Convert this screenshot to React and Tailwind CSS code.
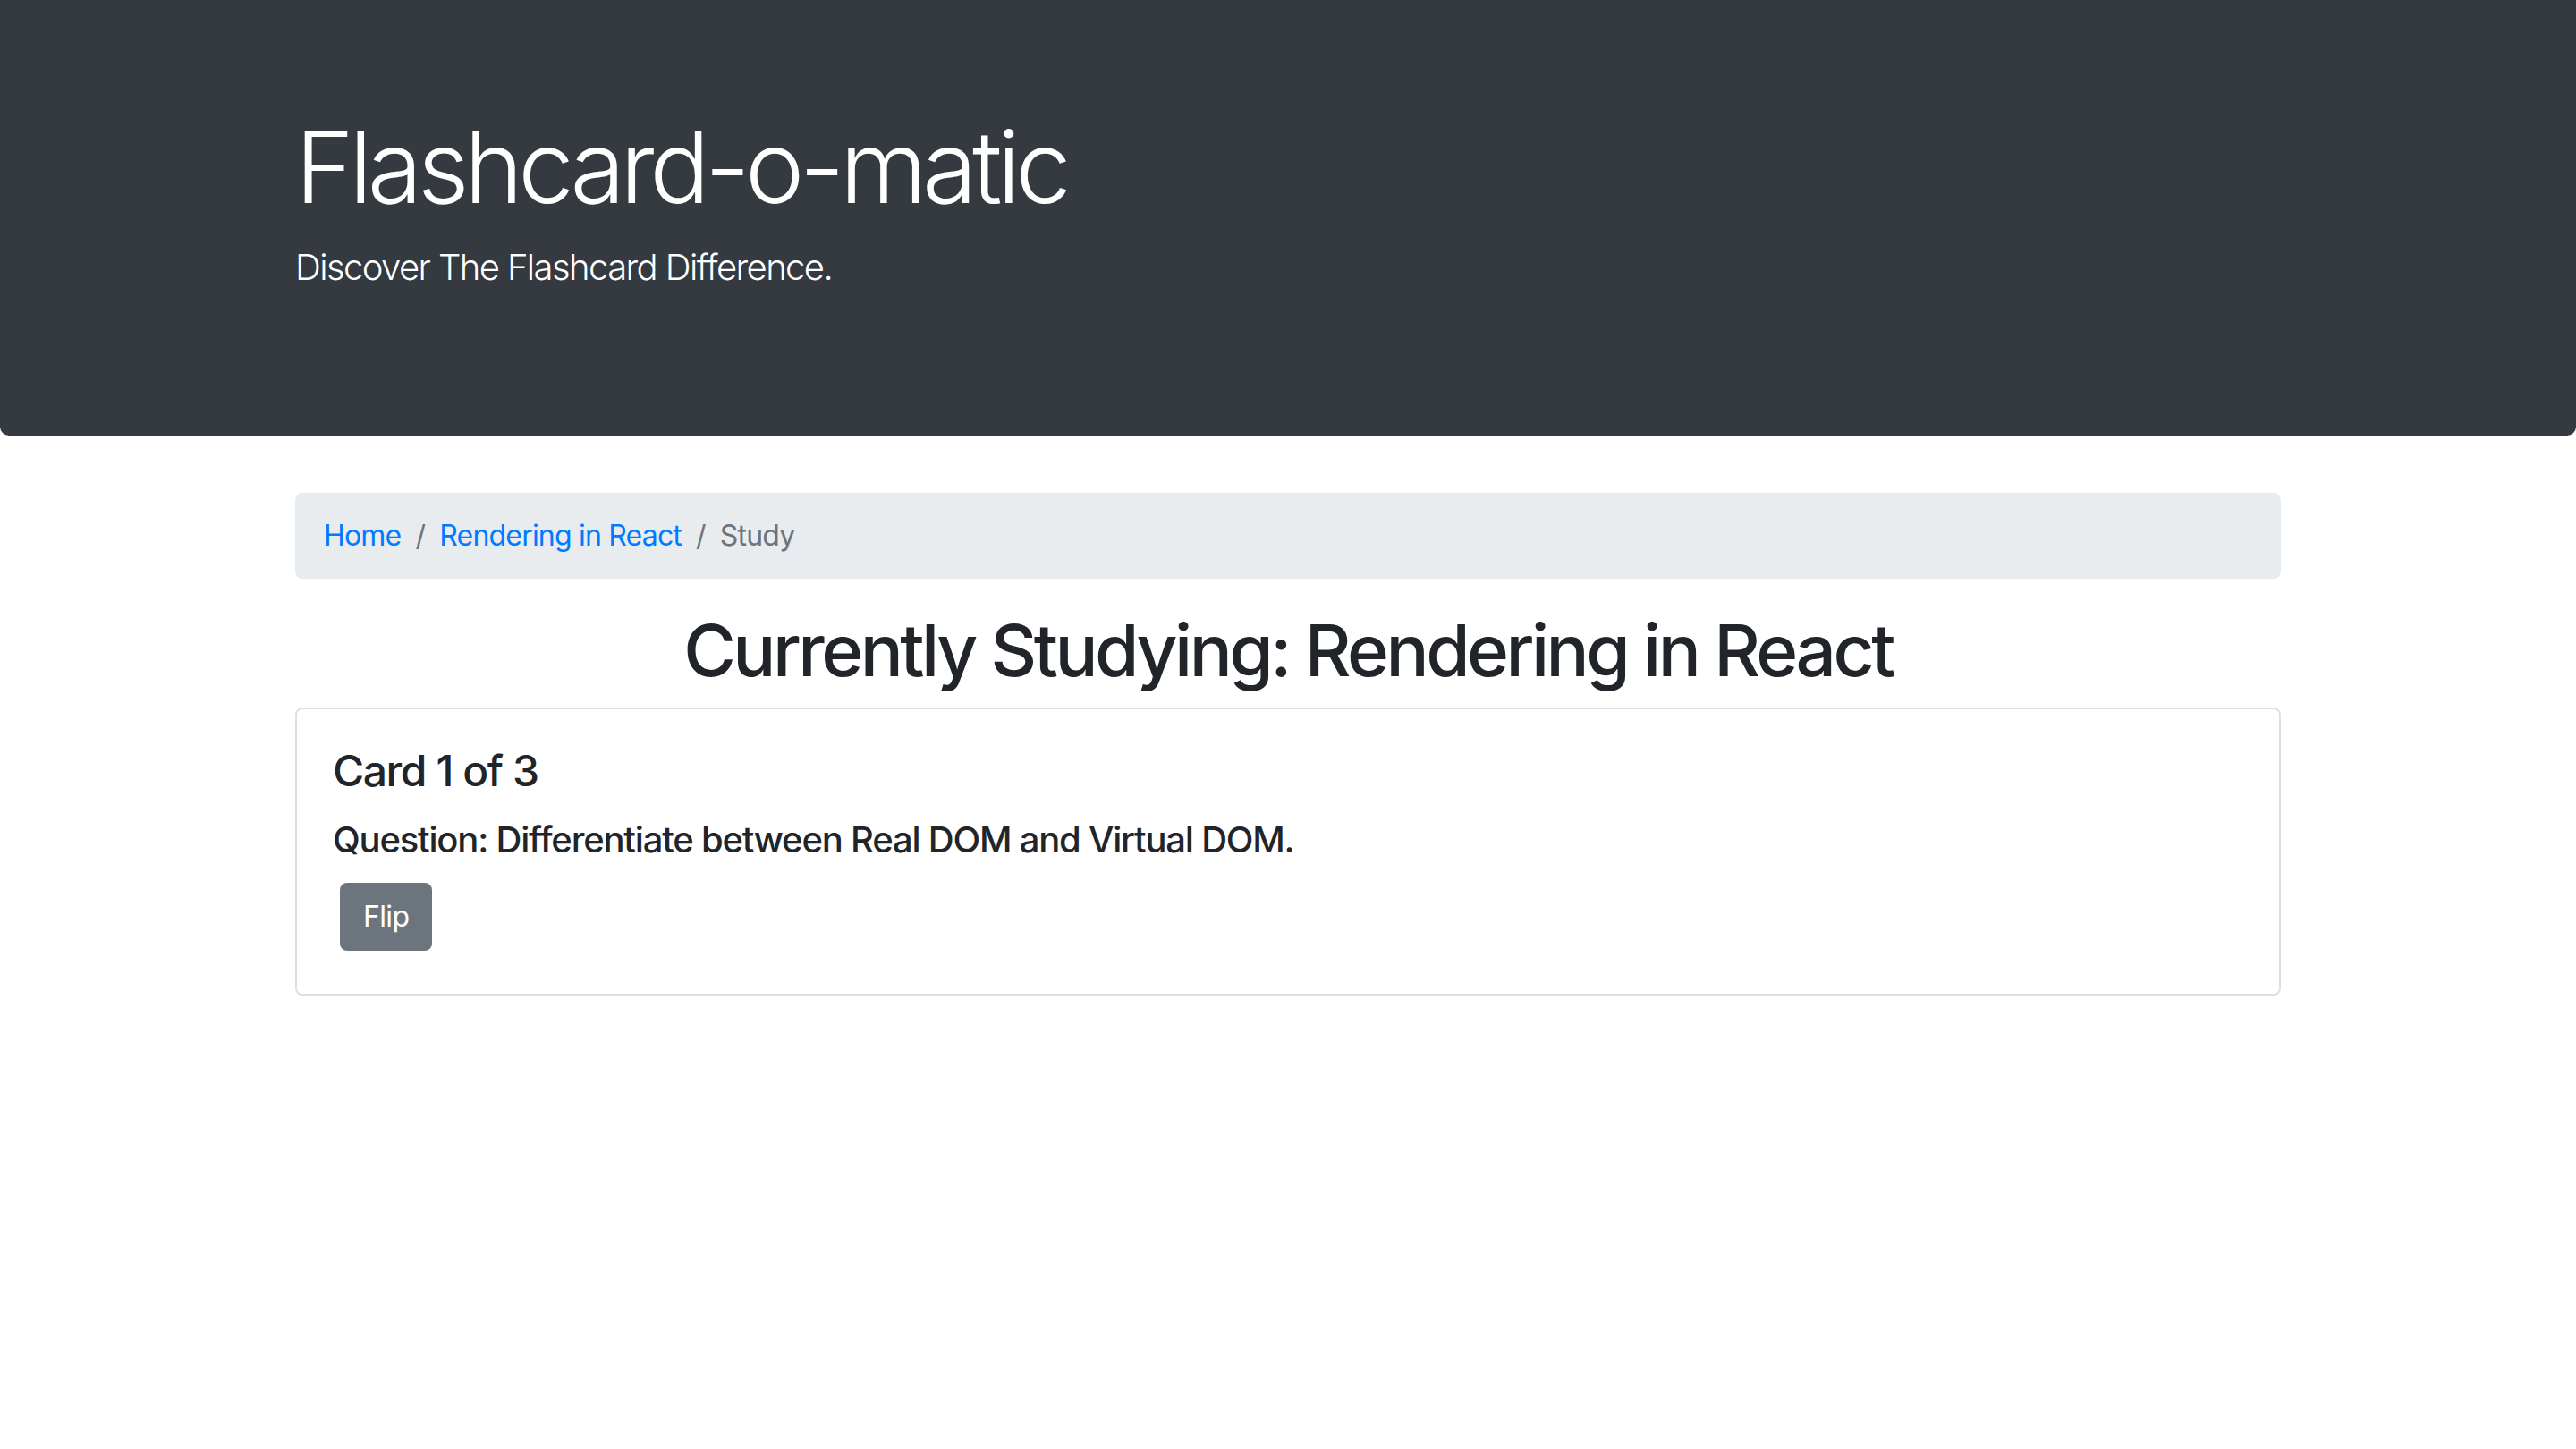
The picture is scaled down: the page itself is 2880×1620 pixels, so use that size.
import { useState } from "react";

const font = { fontFamily: "Inter, 'Noto Sans', 'Liberation Sans', sans-serif" };

function Header() {
  return (
    <div className="bg-[#343a40] text-white rounded-b-[10px] pt-[119px] pb-[158px] mb-[64px]">
      <div className="max-w-[2280px] mx-auto px-[30px]">
        <h1 className="text-[112px] font-light leading-[1.2] mb-[16px] tracking-[-0.05em]">Flashcard-o-matic</h1>
        <p className="text-[40px] font-light leading-[1.5] tracking-[-0.04em]">Discover The Flashcard Difference.</p>
      </div>
    </div>
  );
}

function Breadcrumb() {
  return (
    <nav className="bg-[#e9ecef] rounded-[8px] px-[32px] py-[24px] mb-[32px] text-[32px] leading-[1.5] tracking-[-0.025em]">
      <ol className="flex items-center">
        <li>
          <a href="#" className="text-[#007bff]">Home</a>
        </li>
        <li className="flex">
          <span className="px-[16px] text-[#6c757d]">/</span>
          <a href="#" className="text-[#007bff]">Rendering in React</a>
        </li>
        <li className="flex text-[#6c757d]">
          <span className="px-[16px]">/</span>
          Study
        </li>
      </ol>
    </nav>
  );
}

function StudyCard() {
  const [flipped, setFlipped] = useState(false);
  return (
    <div className="border-2 border-[rgba(0,0,0,0.125)] rounded-[8px]">
      <div className="p-[40px]">
        <h4 className="text-[48px] font-medium leading-[1.2] mb-[24px] tracking-[-0.03em]">Card 1 of 3</h4>
        <h5 className="text-[40px] font-medium leading-[1.2] mb-[16px] tracking-[-0.03em]">
          {flipped ? "Answer: The Virtual DOM is a lightweight copy of the Real DOM." : "Question: Differentiate between Real DOM and Virtual DOM."}
        </h5>
        <button
          onClick={() => setFlipped(!flipped)}
          className="m-[8px] bg-[#6c757d] text-white text-[32px] leading-[1.5] px-[24px] py-[12px] border-2 border-[#6c757d] rounded-[8px] tracking-[-0.02em]"
        >
          Flip
        </button>
      </div>
    </div>
  );
}

export default function App() {
  return (
    <div className="min-h-screen bg-white text-[#212529]" style={font}>
      <Header />
      <div className="max-w-[2280px] mx-auto px-[30px]">
        <Breadcrumb />
        <h1 className="text-center text-[80px] font-medium leading-[1.2] mb-[16px] tracking-[-0.044em]">
          Currently Studying: Rendering in React
        </h1>
        <StudyCard />
      </div>
    </div>
  );
}
